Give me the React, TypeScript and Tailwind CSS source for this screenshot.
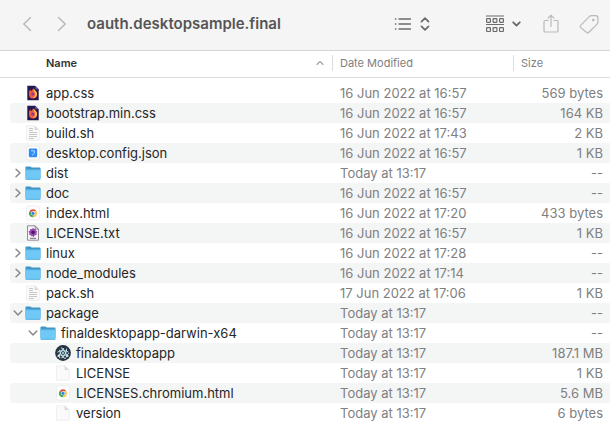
import React from "react";

type Kind = "folder" | "css" | "script" | "json" | "html" | "text" | "electron" | "blank";

interface Entry {
  name: string;
  kind: Kind;
  date: string;
  size: string;
  level?: 0 | 1 | 2;
  open?: boolean;
}

const entries: Entry[] = [
  { name: "app.css", kind: "css", date: "16 Jun 2022 at 16:57", size: "569 bytes" },
  { name: "bootstrap.min.css", kind: "css", date: "16 Jun 2022 at 16:57", size: "164 KB" },
  { name: "build.sh", kind: "script", date: "16 Jun 2022 at 17:43", size: "2 KB" },
  { name: "desktop.config.json", kind: "json", date: "16 Jun 2022 at 16:57", size: "1 KB" },
  { name: "dist", kind: "folder", date: "Today at 13:17", size: "--" },
  { name: "doc", kind: "folder", date: "16 Jun 2022 at 16:57", size: "--" },
  { name: "index.html", kind: "html", date: "16 Jun 2022 at 17:20", size: "433 bytes" },
  { name: "LICENSE.txt", kind: "text", date: "16 Jun 2022 at 16:57", size: "1 KB" },
  { name: "linux", kind: "folder", date: "16 Jun 2022 at 17:28", size: "--" },
  { name: "node_modules", kind: "folder", date: "16 Jun 2022 at 17:14", size: "--" },
  { name: "pack.sh", kind: "script", date: "17 Jun 2022 at 17:06", size: "1 KB" },
  { name: "package", kind: "folder", date: "Today at 13:17", size: "--", open: true },
  { name: "finaldesktopapp-darwin-x64", kind: "folder", date: "Today at 13:17", size: "--", level: 1, open: true },
  { name: "finaldesktopapp", kind: "electron", date: "Today at 13:17", size: "187.1 MB", level: 2 },
  { name: "LICENSE", kind: "blank", date: "Today at 13:17", size: "1 KB", level: 2 },
  { name: "LICENSES.chromium.html", kind: "html", date: "Today at 13:17", size: "5.6 MB", level: 2 },
  { name: "version", kind: "blank", date: "Today at 13:17", size: "6 bytes", level: 2 },
];

const indents = ["pl-0", "pl-[15px]", "pl-[30px]"];

function Page() {
  return (
    <>
      <path d="M1.5 .8h8.700l4 4v10.400H1.500z" fill="#fafafa" stroke="#e6e6e6" strokeWidth=".6" />
      <path d="M9.700 .8v4.200h4.200z" fill="#d9d9d9" />
    </>
  );
}

function FileIcon({ kind }: { kind: Kind }) {
  return (
    <svg viewBox="0 0 16 16" className="size-4 shrink-0" aria-hidden="true">
      {kind === "folder" && (
        <>
          <path d="M.5 2.400c0-.7.4-1 1-1h4l1.200 1.100h7.800c.6 0 1 .3 1 .9V13H.5z" fill="#3f96c4" />
          <path d="M.5 4.400h15v9.500c0 .5-.3.800-.8.800H1.300c-.5 0-.8-.3-.8-.8z" fill="#6fc8f5" />
          <path d="M.5 4.800h15M.7 14.300h14.600" stroke="#55aedc" strokeWidth=".8" />
        </>
      )}
      {kind === "css" && (
        <>
          <path d="M2.300 .8h7.900l3.500 3.500v10.900H2.300z" fill="#251850" />
          <path d="M10.200 .8v3.500h3.500z" fill="#6d55a0" />
          <path d="M4 7.500c0-1.400.7-2.400 1.400-3 .1.900.6 1.200 1.200 1.400.4-1 1.200-1.800 2.300-2.300.1 1 .9 1.500 1.700 2.300 1 .9 1.600 2 1.400 3.600a4 4 0 0 1-8 0z" fill="#f25a3c" />
          <path d="M8.900 3.600c.1 1 .9 1.500 1.700 2.300 1 .9 1.600 2 1.400 3.600-.4 2.500-2.300 3.500-4.300 3.400 2-.8 3-2.400 2.400-4.600C9.700 7 8 6 8.900 3.600z" fill="#ffc94a" />
          <circle cx="7.700" cy="9" r="1.500" fill="#8a3aa0" />
        </>
      )}
      {kind === "script" && (
        <>
          <Page />
          <path d="M4 3.500H8M4 5.500H8M4 7.500h8M4 9.500h8M4 11.500h8M4 13.500h5" stroke="#c2c2c2" strokeWidth=".9" />
        </>
      )}
      {kind === "json" && (
        <>
          <rect x="1.500" y="1" width="13" height="14" rx="2" fill="#fdfdfd" stroke="#e3e3e3" strokeWidth=".6" />
          <rect x="3.800" y="3.600" width="8.400" height="8.600" rx="1.200" fill="#318cf5" />
          <path d="M6 5.800h3.300v2.400L7 10.300" stroke="#b9dcff" strokeWidth="1" fill="none" />
        </>
      )}
      {kind === "html" && (
        <>
          <rect x="1.500" y="1" width="13" height="14" rx="1.500" fill="#fdfdfd" stroke="#e5e5e5" strokeWidth=".6" />
          <path d="M8 8.300L4.500 6.200A4 4 0 0 1 11.500 6.300H8z" fill="#df4d41" />
          <path d="M8 8.300L4.500 6.200A4 4 0 0 0 7.700 12.300L9.700 9.300z" fill="#3da35a" />
          <path d="M8 6.300h3.500A4 4 0 0 1 7.700 12.300L9.700 9.300z" fill="#f6c943" />
          <circle cx="8" cy="8.300" r="2.100" fill="#fff" />
          <circle cx="8" cy="8.300" r="1.600" fill="#3f7fe8" />
        </>
      )}
      {kind === "text" && (
        <>
          <path d="M2.500 .8h7.500l3.500 3.500v10.900h-11z" fill="#f8f5fa" stroke="#77727c" strokeWidth=".8" />
          <path d="M10 .8v3.500h3.500z" fill="#d0cbd5" stroke="#77727c" strokeWidth=".6" />
          <path d="M8 2.800l1 1.300 1.700-.2.200 1.700 1.400.9-.8 1.500.3 1.700-1.700.5-1.100 1.200L8 10.800l-1.300.6-1-1.200-1.500-.5.100-1.700-.8-1.500L5 5.600l.2-1.700 1.800.2z" fill="#a14bb5" />
          <circle cx="8" cy="7.200" r="1.800" fill="#4b1765" />
          <path d="M7.600 9.500h.8v2.500M5 13.300h6" stroke="#65586e" strokeWidth=".9" fill="none" />
        </>
      )}
      {kind === "electron" && (
        <>
          <circle cx="8" cy="8" r="7.900" fill="#263341" />
          <g fill="none" stroke="#c3e2ea" strokeWidth="1">
            <ellipse cx="8" cy="8" rx="5.800" ry="2.300" strokeDasharray="11 3" />
            <ellipse cx="8" cy="8" rx="5.800" ry="2.300" transform="rotate(60 8 8)" strokeDasharray="11 3" />
            <ellipse cx="8" cy="8" rx="5.800" ry="2.300" transform="rotate(120 8 8)" strokeDasharray="11 3" />
          </g>
          <circle cx="8" cy="8" r=".9" fill="#d5f2f8" />
          <circle cx="3.300" cy="11" r=".9" fill="#d5f2f8" />
          <circle cx="12.700" cy="11" r=".9" fill="#d5f2f8" />
        </>
      )}
      {kind === "blank" && <Page />}
    </svg>
  );
}

function Toolbar() {
  return (
    <header className="flex h-[51px] shrink-0 items-center border-b border-[#d5d5d5] bg-[#f5f5f5] pr-[11px] pb-[3px] pl-[22px] text-[#6b6b6b]">
      <nav className="flex gap-[25px] text-[#b9b9b9]" aria-label="History">
        <button type="button" aria-label="Back">
          <svg viewBox="0 0 10 16" className="h-4 w-[10px]" fill="none" stroke="currentColor" strokeWidth="1.500" strokeLinecap="round" strokeLinejoin="round"><path d="M8.500 1.500L1.800 8l6.700 6.500" /></svg>
        </button>
        <button type="button" aria-label="Forward">
          <svg viewBox="0 0 10 16" className="h-4 w-[10px]" fill="none" stroke="currentColor" strokeWidth="1.500" strokeLinecap="round" strokeLinejoin="round"><path d="M1.500 1.500L8.200 8l-6.700 6.500" /></svg>
        </button>
      </nav>
      <h1 className="ml-5 text-[15px] leading-5 font-semibold whitespace-nowrap text-[#555]">oauth.desktopsample.final</h1>
      <div className="ml-auto flex items-center">
        <button type="button" aria-label="List view" className="mr-[55px] flex items-center gap-2">
          <svg viewBox="0 0 18 14" className="h-[14px] w-[18px]" fill="none" stroke="currentColor" strokeWidth="1.300" strokeLinecap="round">
            <path d="M5 2h11.500M5 7h11.500M5 12h11.500" />
            <path d="M1.500 2h.3M1.500 7h.3M1.500 12h.3" strokeWidth="1.600" />
          </svg>
          <svg viewBox="0 0 10 14" className="h-[14px] w-[10px]" fill="none" stroke="currentColor" strokeWidth="1.700" strokeLinecap="round" strokeLinejoin="round"><path d="M1.500 4.700L5 1.200l3.500 3.500M1.500 9.300L5 12.800l3.500-3.500" /></svg>
        </button>
        <button type="button" aria-label="Group items" className="mr-[22px] flex items-center gap-[7px]">
          <svg viewBox="0 0 20 18" className="h-[18px] w-5" fill="none" stroke="currentColor" strokeWidth="1.200">
            <path d="M1 1h18M1 9.500h18" />
            <rect x="1.600" y="3.700" width="3.800" height="3.600" rx=".5" />
            <rect x="8.100" y="3.700" width="3.800" height="3.600" rx=".5" />
            <rect x="14.600" y="3.700" width="3.800" height="3.600" rx=".5" />
            <rect x="1.600" y="12.700" width="3.800" height="3.800" rx=".5" />
            <rect x="8.100" y="12.700" width="3.800" height="3.800" rx=".5" />
            <rect x="14.600" y="12.700" width="3.800" height="3.800" rx=".5" />
          </svg>
          <svg viewBox="0 0 9 6" className="h-[6px] w-[9px]" fill="none" stroke="currentColor" strokeWidth="1.800" strokeLinecap="round" strokeLinejoin="round"><path d="M1.200 1.300l3.300 3.200 3.300-3.200" /></svg>
        </button>
        <button type="button" aria-label="Share" className="mr-5 text-[#b9b9b9]">
          <svg viewBox="0 0 16 20" className="h-5 w-4" fill="none" stroke="currentColor" strokeWidth="1.200" strokeLinecap="round" strokeLinejoin="round"><path d="M5 6.500H2.300c-.8 0-1.300.4-1.300 1.200v9c0 .8.500 1.300 1.300 1.300h11.400c.8 0 1.300-.5 1.300-1.300v-9c0-.8-.5-1.200-1.300-1.200H11M8 12.500V1.300M5 4.200l3-3 3 3" /></svg>
        </button>
        <button type="button" aria-label="Tags" className="text-[#b9b9b9]">
          <svg viewBox="0 0 20 20" className="size-5" fill="none" stroke="currentColor" strokeWidth="1.200" strokeLinejoin="round"><path d="M1.700 11.300l8.600-8.600c.7-.7 1.400-1 2.300-1h4.200c1.300 0 2.100.8 2.100 2.100V8c0 .9-.3 1.600-1 2.300l-8 7.900c-.8.800-1.700.8-2.500 0l-5.700-4.600c-.8-.7-.8-1.500 0-2.300z" /><circle cx="14.300" cy="6" r=".7" fill="currentColor" /></svg>
        </button>
      </div>
    </header>
  );
}

function Row({ entry }: { entry: Entry }) {
  return (
    <tr className="group h-5">
      <td className="p-0 pl-[10px]">
        <div className="rounded-l-[4px] group-even:bg-[#f4f5f5]">
          <div className={`flex h-5 items-center ${indents[entry.level ?? 0]}`}>
            <span className="flex w-[15px] shrink-0 items-center pl-[3px]">
              {entry.kind === "folder" && (
                <button type="button" aria-expanded={!!entry.open} aria-label={`Toggle ${entry.name}`} className="text-[#858585]">
                  <svg viewBox="0 0 10 10" className={entry.open ? "size-[10px] rotate-90" : "size-[10px]"} fill="none" stroke="currentColor" strokeWidth="1.400" strokeLinecap="round" strokeLinejoin="round"><path d="M3 1.200L7 5 3 8.800" /></svg>
                </button>
              )}
            </span>
            <FileIcon kind={entry.kind} />
            <span className="ml-[5px] whitespace-nowrap text-[#262626]">{entry.name}</span>
          </div>
        </div>
      </td>
      <td className="p-0 pl-2 whitespace-nowrap group-even:bg-[#f4f5f5]">{entry.date}</td>
      <td className="p-0 pr-[7px] text-right whitespace-nowrap group-even:bg-[#f4f5f5]">{entry.size}</td>
    </tr>
  );
}

export default function App() {
  return (
    <main className="flex h-screen flex-col overflow-hidden bg-white font-['Inter','Liberation_Sans',sans-serif]">
      <Toolbar />
      <div className="min-h-0 flex-1 overflow-hidden">
        <table className="w-full table-fixed border-separate border-spacing-0 text-[13px] leading-5 text-[#808080]">
          <colgroup>
            <col />
            <col className="w-[181px]" />
            <col className="w-[97px]" />
          </colgroup>
          <thead className="text-left text-[11px] leading-4">
            <tr className="h-[27px]">
              <th scope="col" aria-sort="ascending" className="border-b border-[#dcdcdc] p-0 pr-2 pb-[2px] pl-[46px] font-semibold text-[#333]">
                <div className="flex items-center justify-between">
                  Name
                  <svg viewBox="0 0 8 6" className="h-[6px] w-2" fill="none" stroke="#a0a0a0" strokeWidth="1.100" strokeLinecap="round" strokeLinejoin="round"><path d="M1 4.500l3-3 3 3" /></svg>
                </div>
              </th>
              <th scope="col" className="border-b border-[#dcdcdc] p-0 pb-[2px] font-normal">
                <div className="border-l border-[#dedede] pl-[7px]">Date Modified</div>
              </th>
              <th scope="col" className="border-b border-[#dcdcdc] p-0 pb-[2px] font-normal">
                <div className="border-l border-[#dedede] pl-[7px]">Size</div>
              </th>
            </tr>
          </thead>
          <tbody className="before:block before:h-[5px] before:content-['']">
            {entries.map((entry) => (
              <Row key={entry.name} entry={entry} />
            ))}
          </tbody>
        </table>
      </div>
    </main>
  );
}
